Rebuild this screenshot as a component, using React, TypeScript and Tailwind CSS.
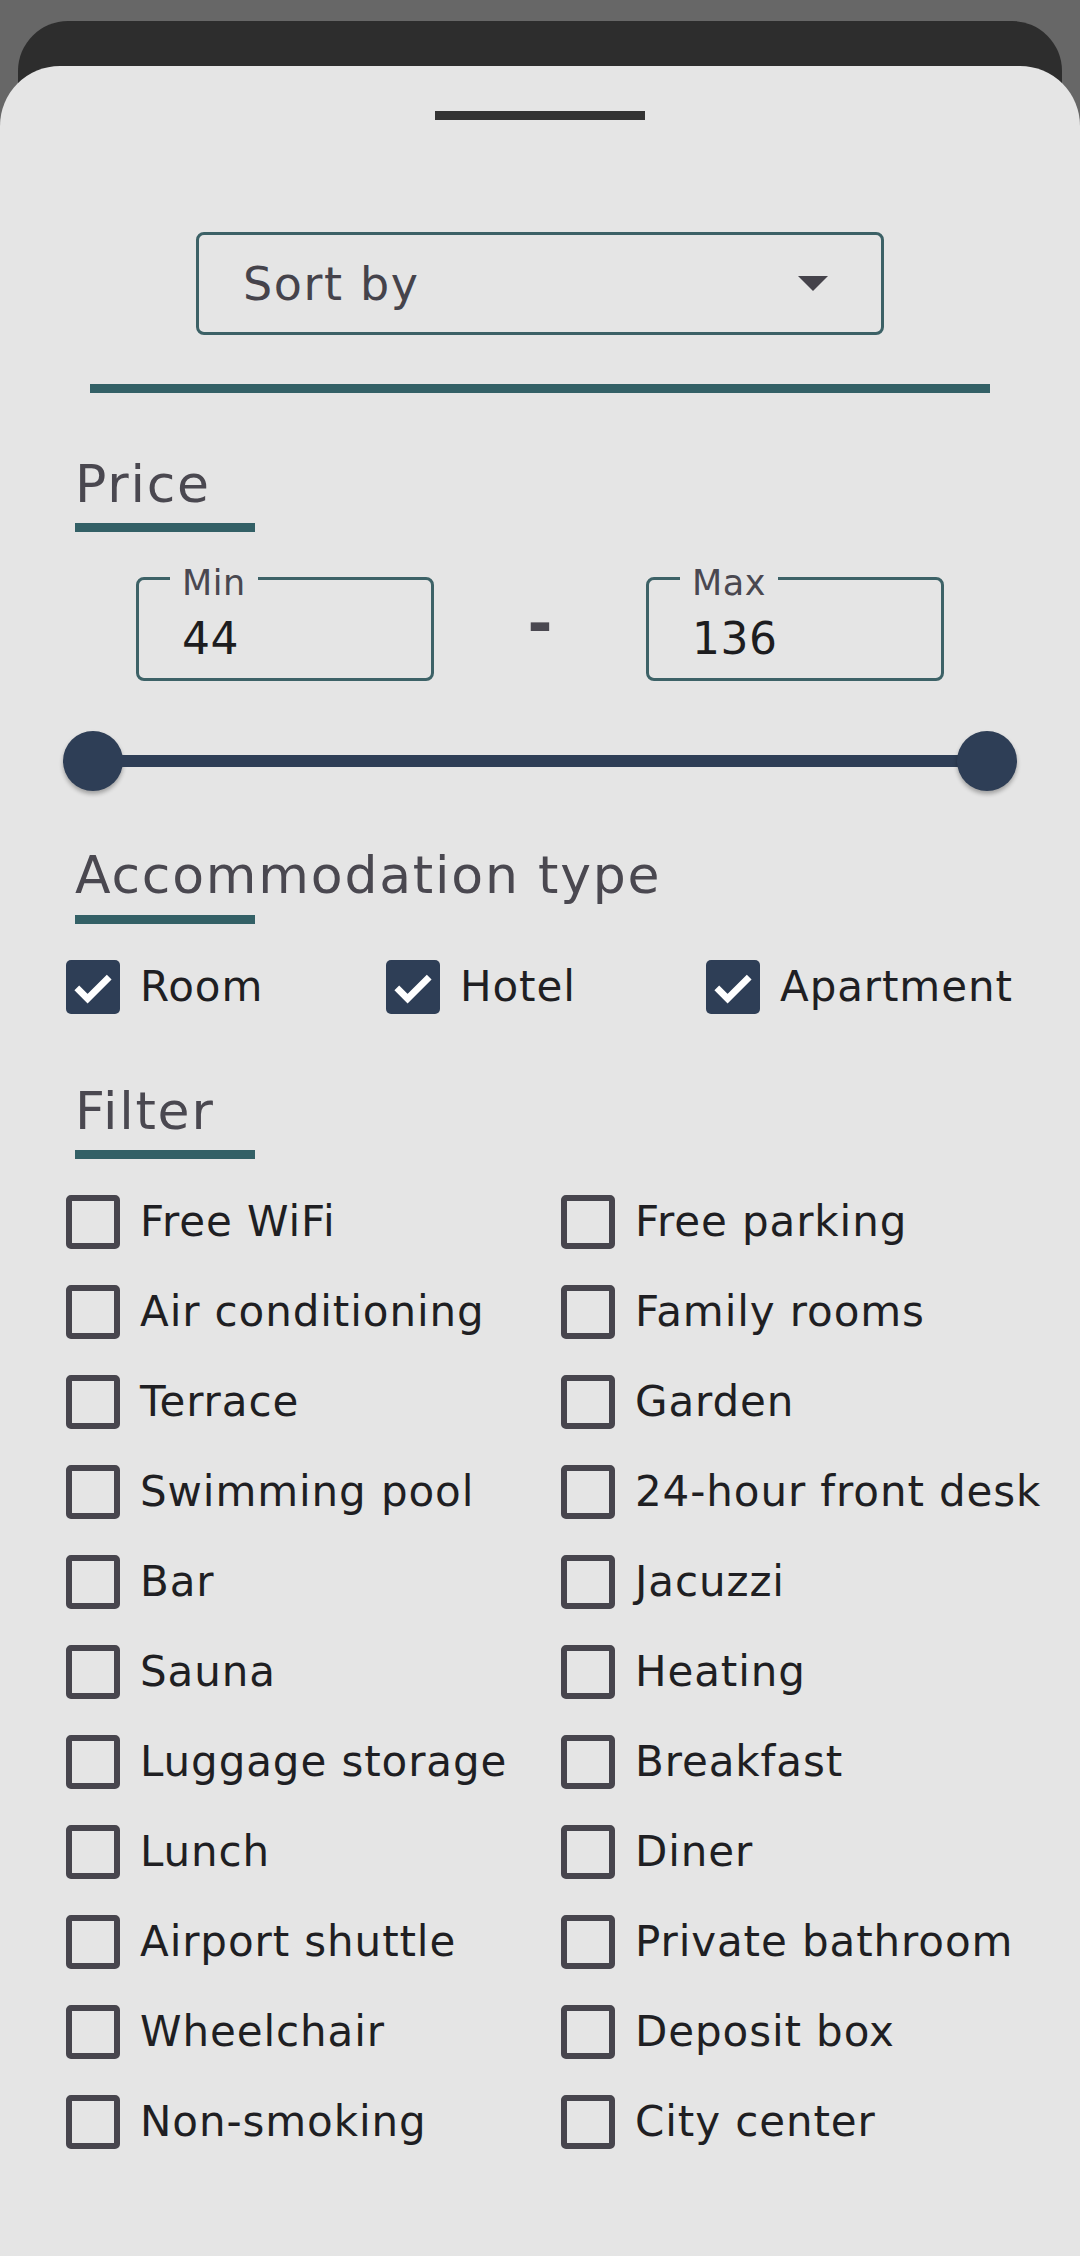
import React from 'react';

const accommodation = ['Room', 'Hotel', 'Apartment'];

const filters = [
  'Free WiFi', 'Free parking',
  'Air conditioning', 'Family rooms',
  'Terrace', 'Garden',
  'Swimming pool', '24-hour front desk',
  'Bar', 'Jacuzzi',
  'Sauna', 'Heating',
  'Luggage storage', 'Breakfast',
  'Lunch', 'Diner',
  'Airport shuttle', 'Private bathroom',
  'Wheelchair', 'Deposit box',
  'Non-smoking', 'City center',
];

function CheckBox({ checked }: { checked: boolean }) {
  if (checked) {
    return (
      <span className="flex h-[54px] w-[54px] shrink-0 items-center justify-center rounded-[5px] bg-[#2e3e56]">
        <svg width="54" height="54" viewBox="0 0 24 24" fill="none">
          <polyline points="4.8,12.4 9.6,17.2 19.2,7.6" stroke="#ffffff" strokeWidth="3" strokeLinecap="butt" strokeLinejoin="miter" />
        </svg>
      </span>
    );
  }
  return <span className="h-[54px] w-[54px] shrink-0 rounded-[5px] border-[6px] border-[#47454d]" />;
}

function Option({ label, checked }: { label: string; checked: boolean }) {
  return (
    <label className="flex h-[54px] items-center gap-[20px]">
      <CheckBox checked={checked} />
      <span className="whitespace-nowrap text-[42px] leading-none tracking-[0.9px] text-[#1f1f23]">{label}</span>
    </label>
  );
}

function SectionTitle({ children }: { children: React.ReactNode }) {
  return (
    <div className="pl-[75px]">
      <h2 className="text-[52px] font-normal leading-none tracking-[1.8px] text-[#4a4850]">{children}</h2>
    </div>
  );
}

function Underline({ className }: { className: string }) {
  return <div className={`ml-[75px] h-[9px] w-[180px] bg-[#336066] ${className}`} />;
}

function PriceField({ label, value }: { label: string; value: string }) {
  return (
    <div className="relative h-[104px] w-[298px] rounded-[8px] border-[3px] border-[#3d6267] pl-[43px] pt-[37px]">
      <span className="absolute -top-[14px] left-[31px] bg-[#e5e5e5] px-[12px] text-[35px] leading-none tracking-[0.5px] text-[#4a4850]">
        {label}
      </span>
      <span className="text-[44px] leading-none tracking-[0.5px] text-[#1d1d20]">{value}</span>
    </div>
  );
}

export default function App() {
  return (
    <div className="min-h-screen bg-[#676767] pt-[21px]" style={{ fontFamily: '"DejaVu Sans", sans-serif' }}>
      <div className="mx-[18px] h-[100px] rounded-t-[50px] bg-[#2d2d2d]" />

      <div className="relative -mt-[55px] min-h-[2190px] rounded-t-[60px] bg-[#e5e5e5] pb-[80px]">
        {/* drag handle */}
        <div className="mx-auto h-[9px] w-[210px] translate-y-[45px] bg-[#333333]" />

        {/* Sort by */}
        <div className="mx-auto mt-[157px] flex h-[103px] w-[688px] items-center justify-between rounded-[8px] border-[3px] border-[#3c6166] pl-[44px] pr-[53px]">
          <span className="text-[46px] leading-none tracking-[1.6px] text-[#45434b]">Sort by</span>
          <svg width="30" height="15" viewBox="0 0 30 15">
            <polygon points="0,0 30,0 15,15" fill="#45434b" />
          </svg>
        </div>

        <div className="mx-[90px] mt-[49px] h-[9px] bg-[#336066]" />

        {/* Price */}
        <div className="mt-[65px]">
          <SectionTitle>Price</SectionTitle>
        </div>
        <Underline className="mt-[13px]" />

        <div className="mt-[45px] flex items-center justify-center">
          <PriceField label="Min" value="44" />
          <div className="flex w-[212px] justify-center pb-[12px] text-[60px] font-bold leading-none text-[#4a4850]">-</div>
          <PriceField label="Max" value="136" />
        </div>

        {/* Slider */}
        <div className="mx-[63px] mt-[50px] flex h-[60px] items-center">
          <span className="h-[60px] w-[60px] shrink-0 rounded-full bg-[#2e3e56] shadow-[0_3px_4px_rgba(0,0,0,0.3)]" />
          <span className="-mx-[2px] h-[12px] flex-1 bg-[#2e3e56]" />
          <span className="h-[60px] w-[60px] shrink-0 rounded-full bg-[#2e3e56] shadow-[0_3px_4px_rgba(0,0,0,0.3)]" />
        </div>

        {/* Accommodation type */}
        <div className="mt-[58px]">
          <SectionTitle>Accommodation type</SectionTitle>
        </div>
        <Underline className="mt-[14px]" />

        <div className="mt-[36px] grid grid-cols-[320px_320px_1fr] pl-[66px]">
          {accommodation.map((a) => (
            <Option key={a} label={a} checked />
          ))}
        </div>

        {/* Filter */}
        <div className="mt-[71px]">
          <SectionTitle>Filter</SectionTitle>
        </div>
        <Underline className="mt-[13px]" />

        <div className="mt-[36px] grid grid-cols-[495px_1fr] gap-y-[36px] pl-[66px]">
          {filters.map((f) => (
            <Option key={f} label={f} checked={false} />
          ))}
        </div>
      </div>
    </div>
  );
}
